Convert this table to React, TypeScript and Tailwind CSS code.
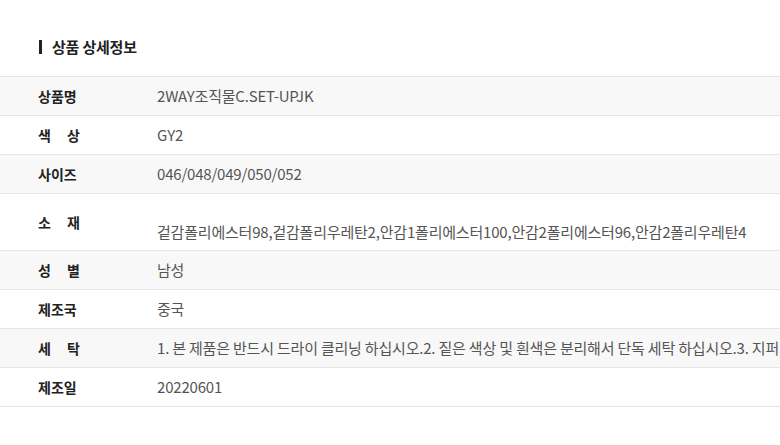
import React from 'react'

const rows: { label: string[]; value: string; tall?: boolean }[] = [
  { label: ['상품명'], value: '2WAY조직물C.SET-UPJK' },
  { label: ['색', '상'], value: 'GY2' },
  { label: ['사이즈'], value: '046/048/049/050/052' },
  {
    label: ['소', '재'],
    value: '겉감폴리에스터98,겉감폴리우레탄2,안감1폴리에스터100,안감2폴리에스터96,안감2폴리우레탄4',
    tall: true,
  },
  { label: ['성', '별'], value: '남성' },
  { label: ['제조국'], value: '중국' },
  {
    label: ['세', '탁'],
    value:
      '1. 본 제품은 반드시 드라이 클리닝 하십시오.2. 짙은 색상 및 흰색은 분리해서 단독 세탁 하십시오.3. 지퍼, 단추 등 부자재는 잠근 후 세탁 하십시오.',
  },
  { label: ['제조일'], value: '20220601' },
]

export default function App() {
  return (
    <div
      className="w-[780px] h-[445px] overflow-hidden bg-white"
      style={{ fontFamily: '"Noto Sans CJK KR", "Noto Sans", sans-serif' }}
    >
      {/* Title */}
      <div className="flex items-center h-[76px] pl-[39px] pt-[18px]">
        <span className="w-[3px] h-[14px] bg-[#222] mr-[10px]"></span>
        <h2 className="text-[15px] font-bold text-[#222] tracking-[-0.2px]">상품 상세정보</h2>
      </div>

      {/* Info table */}
      <div className="border-t border-[#e5e5e5]">
        {rows.map((row, i) => (
          <div
            key={i}
            className={`flex border-b border-[#e5e5e5] ${i % 2 === 0 ? 'bg-[#f8f8f8]' : 'bg-white'} ${
              row.tall ? 'h-[57px]' : 'h-[39px]'
            }`}
          >
            <div className="w-[157px] shrink-0 pl-[38px] flex items-center">
              {row.label.length > 1 ? (
                <span className="w-[42px] flex justify-between text-[14px] font-bold text-[#222]">
                  {row.label.map((c) => (
                    <span key={c}>{c}</span>
                  ))}
                </span>
              ) : (
                <span className="text-[14px] font-bold text-[#222]">{row.label[0]}</span>
              )}
            </div>
            <div
              className={`flex-1 min-w-0 flex whitespace-nowrap overflow-hidden text-[15px] text-[#555] tracking-[-0.2px] ${
                row.tall ? 'items-end pb-[7px]' : 'items-center'
              }`}
            >
              {row.value}
            </div>
          </div>
        ))}
      </div>
    </div>
  )
}
